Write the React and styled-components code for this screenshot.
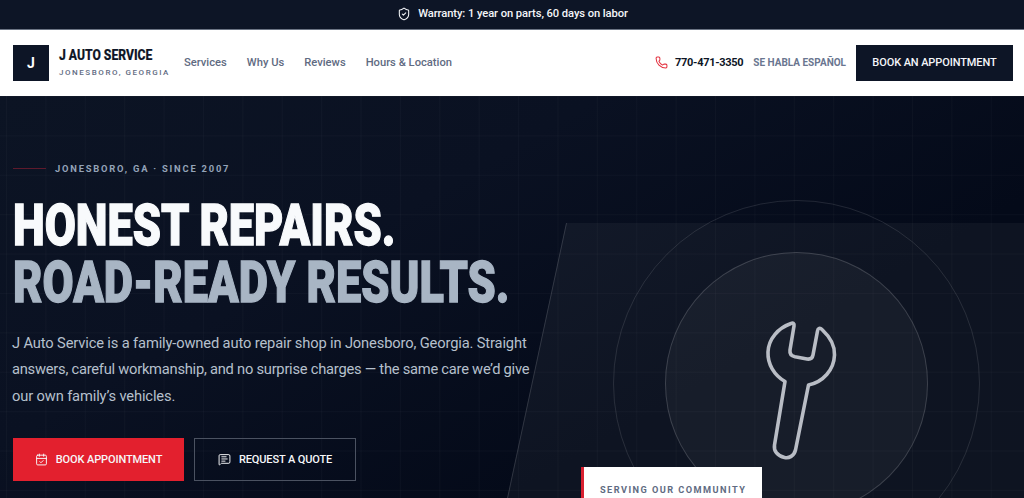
import styled, { createGlobalStyle } from "styled-components"
import { Phone, ShieldCheck, CalendarCheck, MessageSquareText } from "lucide-react"

const GlobalStyle = createGlobalStyle`
  html, body { margin: 0; padding: 0; height: 100%; overflow: hidden; }
  body { font-family: Roboto, "Liberation Sans", sans-serif; background: #060c1b; }
  * { box-sizing: border-box; }
`

const Page = styled.div`
  display: flex;
  flex-direction: column;
  height: 100vh;
  overflow: hidden;
`

const TopBar = styled.div`
  display: flex;
  align-items: center;
  justify-content: center;
  gap: 7px;
  height: 30px;
  flex: none;
  padding: 0 0 2px 1px;
  background: #0d1526;
  border-bottom: 1px solid #6b7484;
  color: #f4f6f9;
  font-size: 11.2px;
  font-weight: 500;
  letter-spacing: -0.08px;
`

const Nav = styled.header`
  display: flex;
  align-items: center;
  height: 66px;
  flex: none;
  padding: 0 11px 1px 13px;
  background: #fff;
`

const LogoMark = styled.div`
  display: flex;
  align-items: center;
  justify-content: center;
  width: 36px;
  height: 36px;
  background: #0d1526;
  color: #fff;
  font-size: 14px;
  font-weight: 700;
`

const Brand = styled.div`
  display: flex;
  flex-direction: column;
  margin-left: 10px;
  width: 125px;
`

const BrandName = styled.div`
  margin-top: -2px;
  color: #0d1526;
  font-size: 15px;
  line-height: 18px;
  font-weight: 800;
  -webkit-text-stroke: 0.2px #0d1526;
  transform: scaleX(0.81);
  transform-origin: left center;
  white-space: nowrap;
`

const BrandSub = styled.div`
  margin-top: 3px;
  color: #5f6b82;
  font-size: 8px;
  line-height: 11px;
  font-weight: 500;
  letter-spacing: 1.55px;
  white-space: nowrap;
`

const NavLinks = styled.nav`
  display: flex;
  gap: 20px;
`

const NavLink = styled.a`
  color: #5f6b82;
  font-size: 11.2px;
  font-weight: 500;
`

const NavRight = styled.div`
  display: flex;
  align-items: center;
  margin-left: auto;
`

const PhoneNumber = styled.span`
  margin-left: 7px;
  color: #0d1526;
  font-size: 11px;
  font-weight: 700;
  letter-spacing: -0.3px;
`

const Habla = styled.span`
  margin-left: 10px;
  color: #6a7690;
  font-size: 10px;
  font-weight: 700;
`

const NavButton = styled.button`
  margin-left: 10px;
  width: 157px;
  height: 36px;
  border: 0;
  background: #0d1526;
  color: #f4f6f9;
  font: 500 11px Roboto, sans-serif;
  letter-spacing: -0.1px;
`

const Hero = styled.section`
  position: relative;
  flex: 1;
  overflow: hidden;
  background-color: #060c1b;
  background-image:
    linear-gradient(rgba(255, 255, 255, 0.022) 1px, transparent 1px),
    linear-gradient(90deg, rgba(255, 255, 255, 0.022) 1px, transparent 1px),
    linear-gradient(150deg, #0c1424 0%, #0a1122 35%, #040a19 70%, #040a18 100%);
  background-size: 39.4px 39.4px, 39.4px 39.4px, 100% 100%;
  background-position: 0 0, 6px 0, 0 0;
`

const SlantPanel = styled.div`
  position: absolute;
  top: 127px;
  left: 566px;
  width: 620px;
  height: 300px;
  transform: skewX(-12.1deg);
  transform-origin: top left;
  background: rgba(255, 255, 255, 0.045);
  border-left: 1px solid rgba(255, 255, 255, 0.14);
`

const Ring = styled.div`
  position: absolute;
  left: ${(p) => p.$cx - p.$size / 2}px;
  top: ${(p) => p.$cy - p.$size / 2}px;
  width: ${(p) => p.$size}px;
  height: ${(p) => p.$size}px;
  border-radius: 50%;
  border: 1px solid ${(p) => p.$line};
  background: ${(p) => p.$fill};
`

const WrenchArt = styled.svg`
  position: absolute;
  left: 740px;
  top: 204px;
  width: 120px;
  height: 170px;
  fill: none;
  stroke: #b9bdc5;
  stroke-width: 3.6;
  stroke-linejoin: round;
`

const CommunityCard = styled.div`
  position: absolute;
  left: 581px;
  top: 371px;
  width: 181px;
  height: 60px;
  padding: 17px 0 0 16px;
  background: #fff;
  border-left: 3px solid #d92030;
  color: #5f6b82;
  font-size: 9.2px;
  line-height: 12px;
  font-weight: 700;
  letter-spacing: 1.45px;
  white-space: nowrap;
`

const HeroCopy = styled.div`
  position: relative;
  display: flex;
  flex-direction: column;
  align-items: flex-start;
  padding: 65px 0 0 13px;
  width: 560px;
`

const Eyebrow = styled.div`
  display: flex;
  align-items: center;
  gap: 9px;
  height: 14px;
  color: #94a3b8;
  font-size: 9.4px;
  font-weight: 700;
  letter-spacing: 1.78px;
  white-space: nowrap;
`

const EyebrowLine = styled.span`
  display: block;
  width: 33px;
  height: 1px;
  background: #5e1a2c;
`

const Headline = styled.h1`
  margin: 22px 0 0;
  font-size: 58px;
  line-height: 57px;
  font-weight: 900;
  white-space: nowrap;
`

const HeadLine = styled.span`
  display: block;
  width: max-content;
  color: ${(p) => p.$color};
  -webkit-text-stroke: 1.3px ${(p) => p.$color};
  transform: scaleX(0.778);
  transform-origin: left center;
`

const Lede = styled.p`
  margin: 19px 0 0 -1px;
  width: 540px;
  color: #b6c0cd;
  font-size: 14.7px;
  line-height: 26.4px;
  font-weight: 400;
  white-space: nowrap;
`

const LedeLine = styled.span`
  display: block;
  letter-spacing: ${(p) => (p.$tight ? "-0.24px" : "-0.14px")};
`

const Actions = styled.div`
  display: flex;
  gap: 10px;
  margin-top: 29px;
`

const ActionButton = styled.button`
  display: flex;
  align-items: center;
  justify-content: center;
  gap: 8px;
  width: ${(p) => p.$w}px;
  height: 43px;
  background: ${(p) => (p.$primary ? "#e3202e" : "transparent")};
  border: ${(p) => (p.$primary ? "0" : "1px solid #4b5261")};
  color: #f6f7f9;
  font: 500 11px Roboto, sans-serif;
  letter-spacing: -0.12px;
`

export default function App() {
  return (
    <Page>
      <GlobalStyle />
      <TopBar>
        <ShieldCheck size={14} strokeWidth={1.8} />
        <span>Warranty: 1 year on parts, 60 days on labor</span>
      </TopBar>
      <Nav>
        <LogoMark>J</LogoMark>
        <Brand>
          <BrandName>J AUTO SERVICE</BrandName>
          <BrandSub>JONESBORO, GEORGIA</BrandSub>
        </Brand>
        <NavLinks>
          <NavLink>Services</NavLink>
          <NavLink>Why Us</NavLink>
          <NavLink>Reviews</NavLink>
          <NavLink>Hours &amp; Location</NavLink>
        </NavLinks>
        <NavRight>
          <Phone size={13} color="#e3303e" strokeWidth={1.9} />
          <PhoneNumber>770-471-3350</PhoneNumber>
          <Habla>SE HABLA ESPAÑOL</Habla>
          <NavButton>BOOK AN APPOINTMENT</NavButton>
        </NavRight>
      </Nav>
      <Hero>
        <SlantPanel />
        <Ring $cx={796} $cy={287} $size={367} $line="rgba(255,255,255,0.11)" $fill="transparent" />
        <Ring $cx={796} $cy={287} $size={263} $line="rgba(255,255,255,0.16)" $fill="rgba(255,255,255,0.04)" />
        <WrenchArt viewBox="0 0 120 170">
          <path d="M51 23.5 C53 22.5 54.5 23.5 54 26 L50 50 C49.5 54 51.5 56 55 56.8 L67 59 C70.5 59.5 72.5 58 73 55 L77.5 31 C78 28 80 27.5 82 29.5 C90 37 95 46 94.5 55 C94 70 83 82 68.5 85 L55.5 150 C54 156 49 158.5 44.5 157.5 C37.5 156 33.5 151 34.5 145 L45 81.5 C34 75 27.5 64 28 52 C28.5 39 38 28 51 23.5 Z" />
        </WrenchArt>
        <CommunityCard>SERVING OUR COMMUNITY</CommunityCard>
        <HeroCopy>
          <Eyebrow>
            <EyebrowLine />
            JONESBORO, GA · SINCE 2007
          </Eyebrow>
          <Headline>
            <HeadLine $color="#f8fafc">HONEST REPAIRS.</HeadLine>
            <HeadLine $color="#a8b5c4">ROAD-READY RESULTS.</HeadLine>
          </Headline>
          <Lede>
            <LedeLine>J Auto Service is a family-owned auto repair shop in Jonesboro, Georgia. Straight</LedeLine>
            <LedeLine $tight>answers, careful workmanship, and no surprise charges — the same care we’d give</LedeLine>
            <LedeLine>our own family’s vehicles.</LedeLine>
          </Lede>
          <Actions>
            <ActionButton $primary $w={171}>
              <CalendarCheck size={13} strokeWidth={1.8} />
              BOOK APPOINTMENT
            </ActionButton>
            <ActionButton $w={162}>
              <MessageSquareText size={13} strokeWidth={1.8} />
              REQUEST A QUOTE
            </ActionButton>
          </Actions>
        </HeroCopy>
      </Hero>
    </Page>
  )
}
